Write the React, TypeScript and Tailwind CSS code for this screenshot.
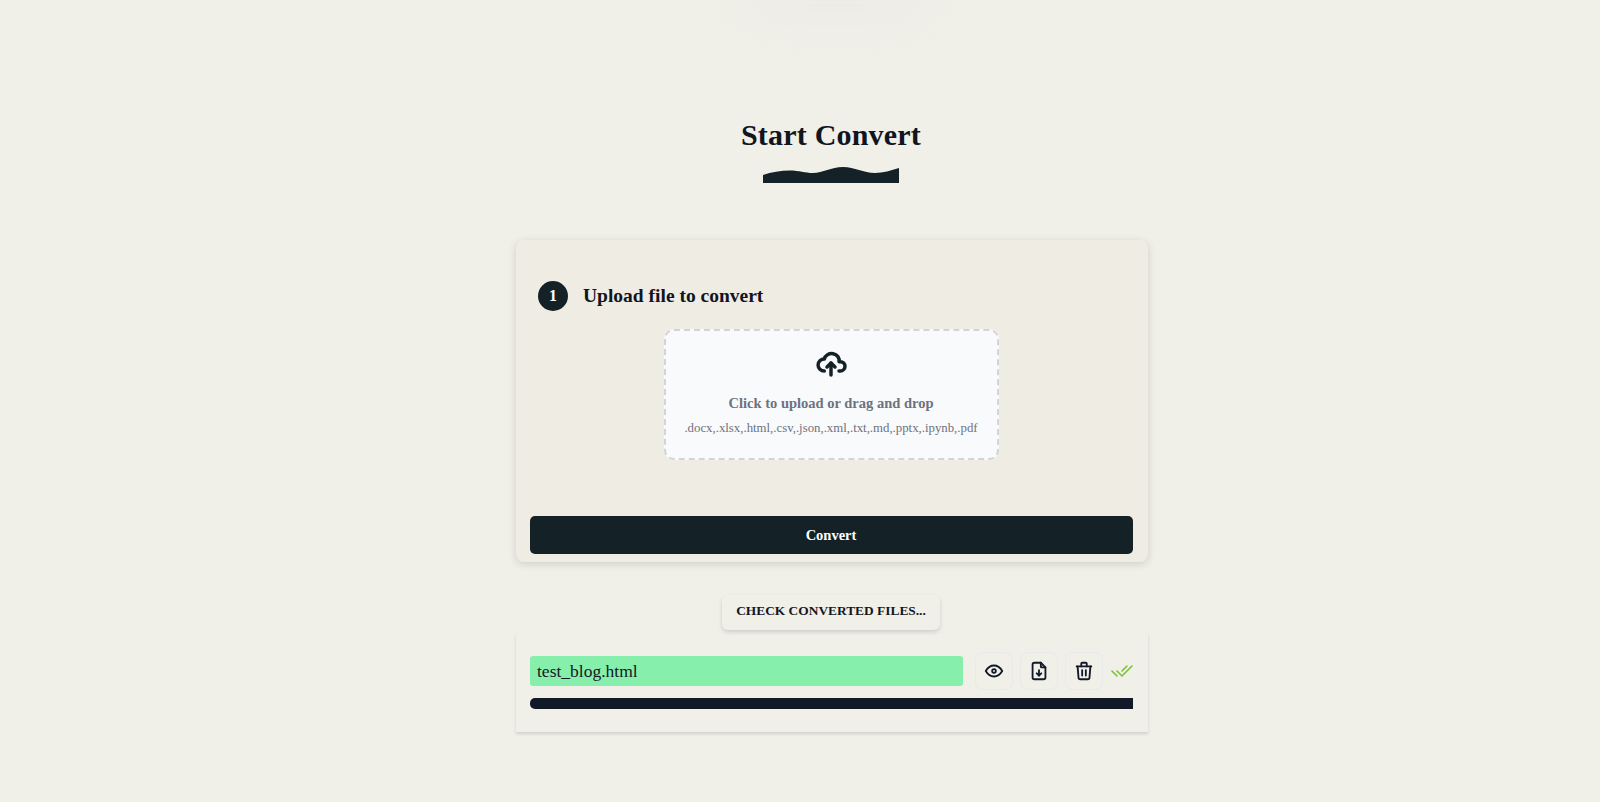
import { TbCloudUpload, TbEye, TbFileDownload, TbTrash, TbChecks } from 'react-icons/tb';

const FileRow = () => (
  <div className="w-[632px] ml-[2px] px-[14px] pt-[19px] h-[99px] shadow-[0_2px_3px_rgba(0,0,0,0.13)]">
    <div className="flex items-center h-[38px]">
      <div className="w-[433px] h-[30px] rounded-[3px] bg-[#86efac] pl-[7px] text-[17.5px] leading-[30px] text-[#14171f]">
        test_blog.html
      </div>
      <div className="ml-[12px] flex gap-[7px]">
        {[TbEye, TbFileDownload, TbTrash].map((Icon, i) => (
          <div
            key={i}
            className="w-[38px] h-[38px] rounded-[8px] border border-[#e8eaec] flex items-center justify-center text-[#111827]"
          >
            <Icon size={22} />
          </div>
        ))}
      </div>
      <TbChecks size={24} strokeWidth={1.6} className="ml-[7px] text-[#7cc233]" />
    </div>
    <div className="mt-[8px] w-[603px] h-[11px] rounded-l-[5px] bg-[#111827]" />
  </div>
);

export default function App() {
  return (
    <div className="relative min-h-[802px] pl-[62px] bg-[#f0efe8] font-['Liberation_Serif',serif] overflow-hidden flex flex-col items-center">
      <div className="absolute top-[-30px] left-[750px] w-[170px] h-[40px] bg-[#e8e8e4] rounded-full blur-[20px] opacity-60" />

      <h1 className="mt-[115px] text-[30px] leading-[40px] font-semibold text-[#101522] tracking-[0.2px]">
        Start Convert
      </h1>
      <svg width="136" height="17" viewBox="0 0 136 17" className="mt-[12px] block">
        <path
          d="M0 8 C8 5 18 3.5 27 3.5 C36 3.5 42 6 50 6 C60 6 68 0 80 0 C92 0 100 6 112 6 C120 6 128 3.5 136 1 L136 16 L0 16 Z"
          fill="#142126"
        />
      </svg>

      <div className="mt-[56px] w-[632px] ml-[2px] h-[322px] rounded-[8px] bg-[#efece4] shadow-[0_2px_8px_rgba(0,0,0,0.14)] flex flex-col">
        <div className="mt-[41px] ml-[22px] flex items-center">
          <div className="w-[30px] h-[30px] rounded-full bg-[#142126] text-white flex items-center justify-center text-[16px] font-bold">
            1
          </div>
          <div className="ml-[15px] text-[19.5px] font-bold text-[#101522]">Upload file to convert</div>
        </div>

        <div className="mt-[18px] ml-[148px] w-[335px] h-[131px] pr-[1px] rounded-[10px] border-2 border-dashed border-[#d1d5db] bg-[#f9fafb] flex flex-col items-center">
          <TbCloudUpload size={32} strokeWidth={2.6} className="mt-[16px] text-[#142126]" />
          <div className="mt-[14px] text-[14.5px] leading-[20px] font-semibold text-[#6b7280]">
            Click to upload or drag and drop
          </div>
          <div className="mt-[7px] text-[12.8px] leading-[16px] text-[#6b7280]">
            .docx,.xlsx,.html,.csv,.json,.xml,.txt,.md,.pptx,.ipynb,.pdf
          </div>
        </div>

        <button className="mt-[56px] ml-[14px] w-[603px] h-[38px] pt-[2px] pr-[1px] rounded-[5px] bg-[#142126] text-white text-[14.5px] font-semibold">
          Convert
        </button>
      </div>

      <button className="mt-[33px] w-[218px] h-[35px] pb-[2px] rounded-[6px] bg-[#f0efe8] shadow-[0_2px_4px_rgba(0,0,0,0.14)] text-[13.4px] font-semibold text-[#14171f]">
        CHECK CONVERTED FILES...
      </button>

      <div className="mt-[3px]">
        <FileRow />
      </div>
    </div>
  );
}
